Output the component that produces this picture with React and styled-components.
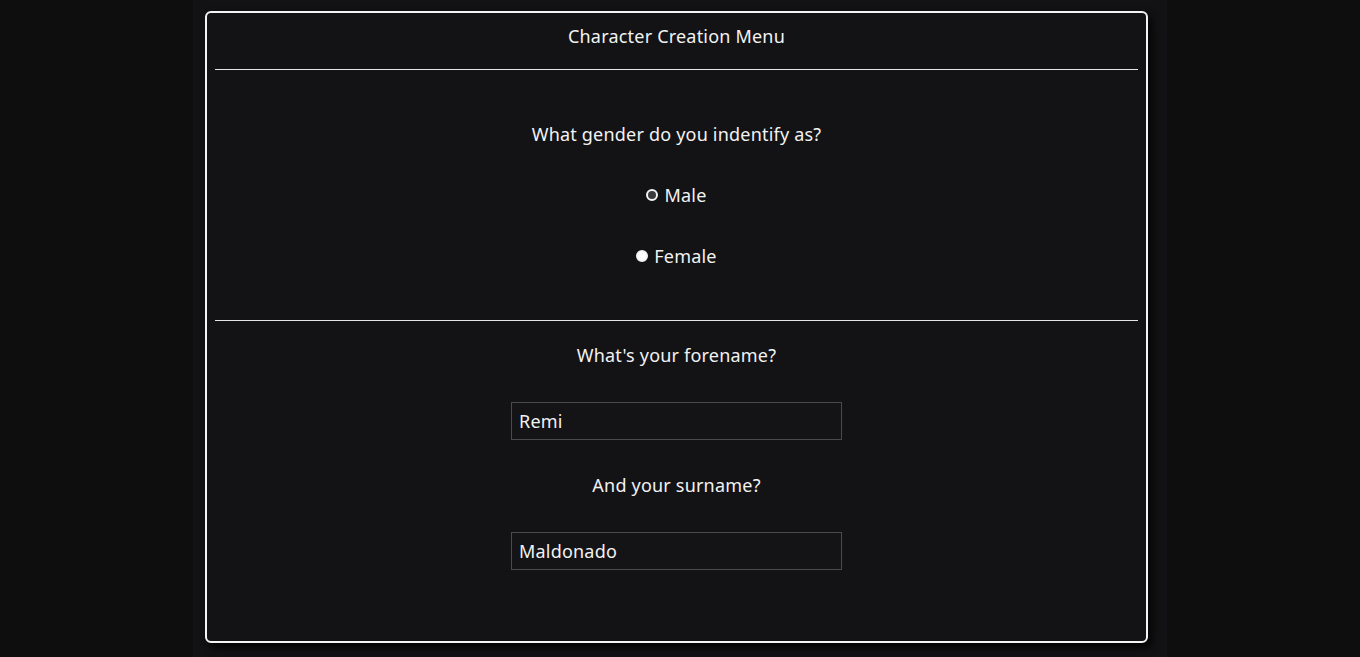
import React, { useState } from "react";
import styled, { createGlobalStyle } from "styled-components";

const GlobalStyle = createGlobalStyle`
  html, body {
    margin: 0;
    background: #0f0e0f;
    font-family: "Noto Sans", "Open Sans", sans-serif;
    color: #f2f2f2;
  }
`;

const Stage = styled.div`
  width: 974px;
  min-height: 657px;
  margin: 0 auto;
  box-sizing: border-box;
  padding: 11px 19px 0 12px;
  background: #121113;
`;

const Menu = styled.div`
  border: 2px solid #f4f4f4;
  border-radius: 6px;
  background: #131215;
  box-shadow: 4px 5px 8px rgba(0, 0, 0, 0.75);
`;

const Title = styled.h1`
  margin: 0;
  padding: 13px 0 23px;
  font-size: 18px;
  font-weight: 400;
  letter-spacing: 0.2px;
  line-height: 20px;
  text-align: center;
`;

const Rule = styled.hr`
  margin: 0 8px;
  border: none;
  border-top: 1px solid #e6e6e6;
`;

const Section = styled.section`
  display: flex;
  flex-direction: column;
  align-items: center;
  gap: ${p => p.gap}px;
  padding: ${p => p.top}px 0 ${p => p.bottom}px;
`;

const Question = styled.p`
  margin: 0;
  font-size: 18px;
  letter-spacing: 0.2px;
  line-height: 20px;
`;

const Option = styled.label`
  display: flex;
  align-items: center;
  gap: 6px;
  font-size: 18px;
  letter-spacing: 0.2px;
  line-height: 20px;
  cursor: pointer;
`;

const Dot = styled.span`
  width: 12px;
  height: 12px;
  box-sizing: border-box;
  border-radius: 50%;
  border: 2px solid #f4f4f4;
  background: ${p => (p.checked ? "#fff" : "#3a393c")};
`;

const Field = styled.input`
  width: 331px;
  height: 38px;
  box-sizing: border-box;
  padding: 0 7px;
  border: 1px solid #4a494c;
  background: #141316;
  color: #f2f2f2;
  font-family: inherit;
  font-size: 18px;
  letter-spacing: 0.2px;
  outline: none;
`;

export default function App() {
  const [gender, setGender] = useState("female");
  const [forename, setForename] = useState("Remi");
  const [surname, setSurname] = useState("Maldonado");

  return (
    <>
      <GlobalStyle />
      <Stage>
        <Menu>
          <Title>Character Creation Menu</Title>
          <Rule />
          <Section top={54} bottom={54} gap={41}>
            <Question>What gender do you indentify as?</Question>
            <Option onClick={() => setGender("male")}>
              <Dot checked={gender === "male"} />
              Male
            </Option>
            <Option onClick={() => setGender("female")}>
              <Dot checked={gender === "female"} />
              Female
            </Option>
          </Section>
          <Rule />
          <Section top={24} bottom={71} gap={37}>
            <Question>What's your forename?</Question>
            <Field value={forename} onChange={e => setForename(e.target.value)} />
            <Question style={{ marginTop: -2 }}>And your surname?</Question>
            <Field value={surname} onChange={e => setSurname(e.target.value)} />
          </Section>
        </Menu>
      </Stage>
    </>
  );
}
